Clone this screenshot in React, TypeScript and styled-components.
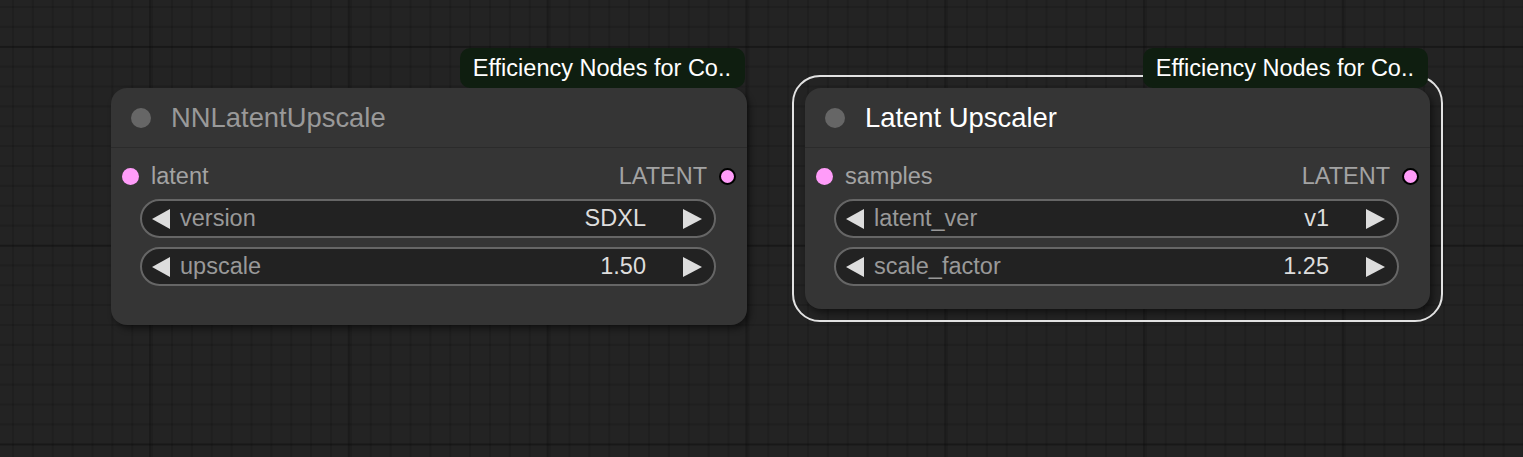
import styled, { createGlobalStyle, css } from "styled-components";

const GlobalStyle = createGlobalStyle`
  html, body {
    margin: 0;
    padding: 0;
    background: #222222;
  }
  body {
    font-family: "Liberation Sans", Arial, sans-serif;
  }
`;

type WidgetData = { label: string; value: string };
type SlotData = { input: string; output: string };

type NodeData = {
  title: string;
  left: number;
  top: number;
  width: number;
  height: number;
  selected: boolean;
  slot: SlotData;
  widgets: WidgetData[];
};

const nodes: NodeData[] = [
  {
    title: "NNLatentUpscale",
    left: 111,
    top: 88,
    width: 636,
    height: 237,
    selected: false,
    slot: { input: "latent", output: "LATENT" },
    widgets: [
      { label: "version", value: "SDXL" },
      { label: "upscale", value: "1.50" },
    ],
  },
  {
    title: "Latent Upscaler",
    left: 805,
    top: 88,
    width: 625,
    height: 221,
    selected: true,
    slot: { input: "samples", output: "LATENT" },
    widgets: [
      { label: "latent_ver", value: "v1" },
      { label: "scale_factor", value: "1.25" },
    ],
  },
];

const LeftArrow = () => (
  <svg width="18" height="20" viewBox="0 0 18 20">
    <polygon points="18,0 18,20 0,10" fill="#dddddd" />
  </svg>
);

const RightArrow = () => (
  <svg width="19" height="20" viewBox="0 0 19 20">
    <polygon points="0,0 0,20 19,10" fill="#dddddd" />
  </svg>
);

const Widget = ({ label, value }: WidgetData) => (
  <WidgetPill>
    <LeftArrow />
    <WidgetLabel>{label}</WidgetLabel>
    <WidgetValue>{value}</WidgetValue>
    <RightArrow />
  </WidgetPill>
);

const GraphNode = ({ node }: { node: NodeData }) => (
  <NodeFrame
    $selected={node.selected}
    style={{ left: node.left, top: node.top, width: node.width, height: node.height }}
  >
    <Badge>Efficiency Nodes for Co..</Badge>
    <TitleBar>
      <TitleDot />
      <TitleText $selected={node.selected}>{node.title}</TitleText>
    </TitleBar>
    <SlotRow>
      <SlotSide>
        <SlotDot />
        <SlotLabel>{node.slot.input}</SlotLabel>
      </SlotSide>
      <SlotSide>
        <SlotLabel>{node.slot.output}</SlotLabel>
        <SlotDot $output />
      </SlotSide>
    </SlotRow>
    <WidgetList>
      {node.widgets.map((w) => (
        <Widget key={w.label} {...w} />
      ))}
    </WidgetList>
  </NodeFrame>
);

const App = () => (
  <>
    <GlobalStyle />
    <Canvas>
      {nodes.map((n) => (
        <GraphNode key={n.title} node={n} />
      ))}
    </Canvas>
  </>
);

export default App;

const Canvas = styled.div`
  position: relative;
  width: 1523px;
  height: 457px;
  overflow: hidden;
  background-color: #232323;
  background-image:
    linear-gradient(to right, rgba(0, 0, 0, 0.22) 0, rgba(0, 0, 0, 0.22) 2px, transparent 2px),
    linear-gradient(to bottom, rgba(0, 0, 0, 0.22) 0, rgba(0, 0, 0, 0.22) 2px, transparent 2px),
    linear-gradient(to right, rgba(0, 0, 0, 0.12) 0, rgba(0, 0, 0, 0.12) 2px, transparent 2px),
    linear-gradient(to bottom, rgba(0, 0, 0, 0.12) 0, rgba(0, 0, 0, 0.12) 2px, transparent 2px);
  background-size: 198.8px 198.8px, 198.8px 198.8px, 19.88px 19.88px, 19.88px 19.88px;
  background-position: 149px 46px, 149px 46px, 12px 6px, 12px 6px;
`;

const NodeFrame = styled.div<{ $selected: boolean }>`
  position: absolute;
  box-sizing: border-box;
  display: flex;
  flex-direction: column;
  background: #353535;
  border-radius: 16px;
  box-shadow: 3px 4px 6px rgba(0, 0, 0, 0.45);
  ${(p) =>
    p.$selected &&
    css`
      &::before {
        content: "";
        position: absolute;
        inset: -13px -13px -13px -13px;
        border: 2px solid #e2e2e2;
        border-radius: 28px;
        pointer-events: none;
      }
    `}
`;

const Badge = styled.div`
  position: absolute;
  right: 2px;
  bottom: 100%;
  z-index: 2;
  height: 40px;
  display: flex;
  align-items: center;
  padding: 0 14px 0 13px;
  background: #0f1e10;
  border-radius: 10px;
  color: #ffffff;
  font-size: 23.5px;
  white-space: nowrap;
`;

const TitleBar = styled.div`
  height: 59px;
  display: flex;
  align-items: center;
  border-bottom: 1px solid #2b2b2b;
  padding-left: 20px;
`;

const TitleDot = styled.div`
  width: 20px;
  height: 20px;
  border-radius: 50%;
  background: #666666;
  margin-right: 20px;
`;

const TitleText = styled.div<{ $selected: boolean }>`
  font-size: 27.4px;
  color: ${(p) => (p.$selected ? "#ffffff" : "#999999")};
  white-space: nowrap;
`;

const SlotRow = styled.div`
  height: 46px;
  padding: 5px 11px 0 11px;
  display: flex;
  align-items: center;
  justify-content: space-between;
`;

const SlotSide = styled.div`
  display: flex;
  align-items: center;
  gap: 12px;
`;

const SlotDot = styled.div<{ $output?: boolean }>`
  box-sizing: border-box;
  width: 17px;
  height: 17px;
  border-radius: 50%;
  background: #ff9cf9;
  ${(p) =>
    p.$output &&
    css`
      border: 2px solid #000000;
    `}
`;

const SlotLabel = styled.div`
  font-size: 23.5px;
  color: #a3a3a3;
`;

const WidgetList = styled.div`
  display: flex;
  flex-direction: column;
  gap: 9px;
  padding: 0 31px 0 29px;
`;

const WidgetPill = styled.div`
  box-sizing: border-box;
  height: 39px;
  display: flex;
  align-items: center;
  padding: 0 12px 0 10px;
  background: #222222;
  border: 2px solid #666666;
  border-radius: 20px;
`;

const WidgetLabel = styled.div`
  flex: 1;
  margin-left: 10px;
  font-size: 23.5px;
  color: #999999;
  white-space: nowrap;
`;

const WidgetValue = styled.div`
  margin-right: 37px;
  font-size: 23.5px;
  color: #dddddd;
  white-space: nowrap;
`;
